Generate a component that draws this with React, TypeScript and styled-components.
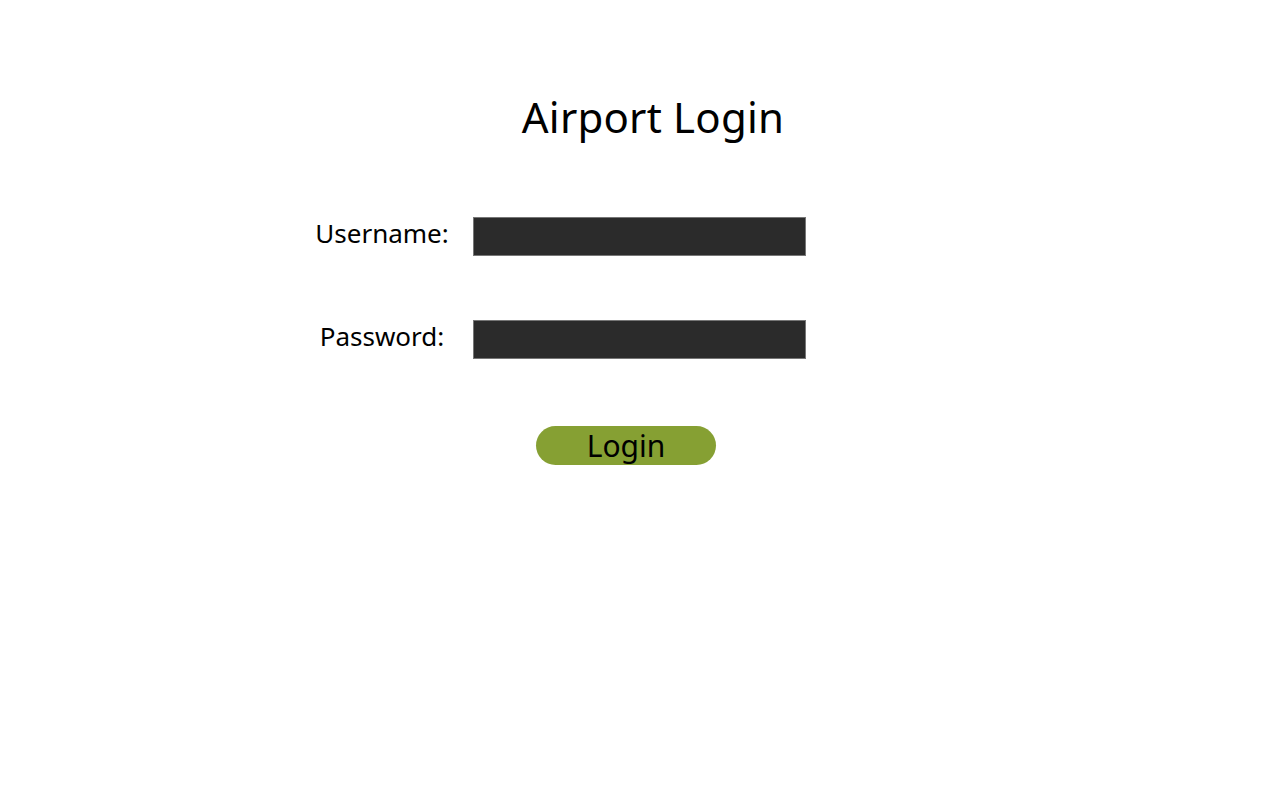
import React from "react";
import styled, { createGlobalStyle } from "styled-components";

const Global = createGlobalStyle`
  html, body { margin: 0; padding: 0; background: #ffffff; }
  body { font-family: "Noto Sans", "Open Sans", sans-serif; color: #000; }
`;

const Page = styled.div`
  width: 1280px;
  height: 800px;
  display: flex;
  flex-direction: column;
  align-items: flex-start;
`;

const Title = styled.h1`
  margin: 0;
  width: 100%;
  box-sizing: border-box;
  padding: 87px 0 0 26px;
  text-align: center;
  font-size: 42px;
  font-weight: 400;
  line-height: 60px;
  letter-spacing: 0.2px;
`;

const Form = styled.form`
  margin: 0;
  display: flex;
  flex-direction: column;
  padding-left: 292px;
  padding-top: 70px;
`;

const Row = styled.div<{ $gap?: number }>`
  display: grid;
  grid-template-columns: 180px 333px;
  column-gap: 1px;
  align-items: center;
  height: 39px;
  margin-bottom: ${(p) => p.$gap ?? 0}px;
`;

const Label = styled.label`
  text-align: center;
  font-size: 26px;
  line-height: 30px;
  padding-bottom: 8px;
`;

const Input = styled.input`
  box-sizing: border-box;
  width: 333px;
  height: 39px;
  margin: 0;
  background: #2b2b2b;
  border: 1px solid #767676;
  color: #fff;
  outline: none;
`;

const ButtonRow = styled.div`
  padding: 67px 0 0 244px;
`;

const LoginButton = styled.button`
  box-sizing: border-box;
  width: 180px;
  height: 39px;
  background: #86a033;
  border: none;
  border-radius: 20px;
  font-family: "Noto Sans", "Open Sans", sans-serif;
  font-size: 30px;
  line-height: 39px;
  padding: 0;
  color: #000;
  cursor: pointer;
`;

export default function App() {
  return (
    <>
      <Global />
      <Page>
        <Title>Airport Login</Title>
        <Form onSubmit={(e) => e.preventDefault()}>
          <Row $gap={64}>
            <Label htmlFor="u">Username:</Label>
            <Input id="u" type="text" />
          </Row>
          <Row>
            <Label htmlFor="p">Password:</Label>
            <Input id="p" type="password" />
          </Row>
          <ButtonRow>
            <LoginButton type="submit">Login</LoginButton>
          </ButtonRow>
        </Form>
      </Page>
    </>
  );
}
